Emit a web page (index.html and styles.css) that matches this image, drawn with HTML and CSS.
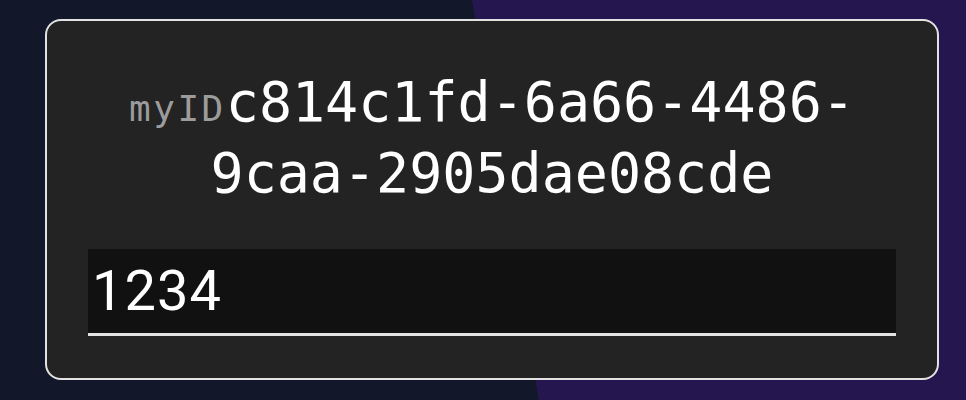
FILE: index.html
```html
<!DOCTYPE html>
<html lang="en">
<head>
<meta charset="utf-8">
<title>myID</title>
<link rel="stylesheet" href="styles.css">
</head>
<body>
  <main class="card">
    <h1 class="id-line"><span class="id-label">myID</span>c814c1fd-6a66-4486-9caa-2905dae08cde</h1>
    <input class="code-input" type="text" value="1234" aria-label="code">
  </main>
</body>
</html>
```

FILE: styles.css
```css
html, body {
  margin: 0;
  padding: 0;
}

body {
  width: 966px;
  height: 400px;
  overflow: hidden;
  background: linear-gradient(80.5deg, #121829 52.17%, #25164f 52.17%);
  font-family: "DejaVu Sans Mono", "Liberation Mono", monospace;
}

.card {
  box-sizing: border-box;
  width: 894px;
  height: 361px;
  margin: 19px 0 0 45px;
  padding: 46px 41px 41px 41px;
  background: #232323;
  border: 2px solid #e2e2e2;
  border-radius: 16px;
  display: flex;
  flex-direction: column;
}

.id-line {
  margin: 0;
  font-family: "DejaVu Sans Mono", "Liberation Mono", monospace;
  font-weight: normal;
  font-size: 55px;
  line-height: 71px;
  color: #ffffff;
  text-align: center;
}

.id-label {
  font-size: 36px;
  line-height: 1;
  letter-spacing: 2.5px;
  color: #9c9c9c;
}

.code-input {
  box-sizing: border-box;
  flex: none;
  width: 808px;
  height: 87px;
  margin: 40px 0 0 0;
  padding: 0 0 0 4px;
  background: #111111;
  border: none;
  border-bottom: 3px solid #e2e2e2;
  border-radius: 0;
  outline: none;
  color: #ffffff;
  font-family: Roboto, "Noto Sans", sans-serif;
  font-size: 56px;
  letter-spacing: 1px;
}
```
